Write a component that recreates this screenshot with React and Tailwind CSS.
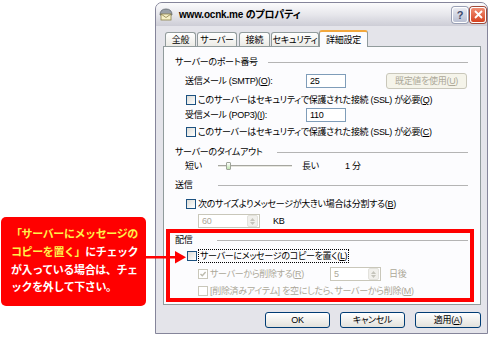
import React from "react";

const F = "font-['Liberation_Sans','Noto_Sans_CJK_JP',sans-serif]";

function Check({ checked, disabled }) {
  return (
    <span
      className={`relative inline-block w-[10px] h-[10px] shrink-0 border ${
        disabled ? "border-[#c9c7ba] bg-white" : "border-[#1c5180] bg-gradient-to-br from-[#dcdcd7] to-white"
      }`}
    >
      {checked && (
        <svg viewBox="0 0 8 8" className="absolute inset-0 w-full h-full">
          <path d="M1.5 4 L3.3 5.8 L6.6 2" stroke={disabled ? "#bdbbad" : "#21a121"} strokeWidth="1.4" fill="none" />
        </svg>
      )}
    </span>
  );
}

function Heading({ children, w }) {
  return (
    <div className="flex items-center h-[14px]">
      <span className={`shrink-0 ${w}`}>{children}</span>
      <span className="flex-1 h-px bg-[#b4b4b4]" />
    </div>
  );
}

function Spin({ value, w }) {
  return (
    <div className={`${w} h-[14px] border border-[#c9c7ba] bg-white flex items-center text-[#aca899]`}>
      <span className="flex-1 pl-[3px]">{value}</span>
      <span className="w-[11px] h-[12px] mr-[1px] bg-[#f1f0ec] border border-[#e3e2dc] rounded-[2px] flex flex-col items-center justify-center gap-[1px]">
        <svg width="5" height="3" viewBox="0 0 5 3"><path d="M0 3 L2.5 0 L5 3 Z" fill="#c5c4bb" /></svg>
        <svg width="5" height="3" viewBox="0 0 5 3"><path d="M0 0 L2.5 3 L5 0 Z" fill="#c5c4bb" /></svg>
      </span>
    </div>
  );
}

function Btn({ children, className = "" }) {
  return (
    <div
      className={`h-[16px] rounded-[3px] border border-[#003c74] bg-gradient-to-b from-white to-[#e3e2dc] flex items-center justify-center ${className}`}
    >
      {children}
    </div>
  );
}

function Tab({ children, w, selected }) {
  if (selected)
    return (
      <div
        className={`${w} h-[17px] -mb-px relative z-10 bg-[#fcfcfe] border-x border-[#919b9c] rounded-t-[3px] border-t-[2px] border-t-[#f3a83c] flex items-center justify-center`}
      >
        {children}
      </div>
    );
  return (
    <div
      className={`${w} h-[14px] bg-gradient-to-b from-white to-[#ecebe6] border-x border-t border-[#919b9c] rounded-t-[3px] flex items-center justify-center`}
    >
      {children}
    </div>
  );
}

export default function App() {
  return (
    <div className={`relative w-[490px] h-[340px] bg-white flex whitespace-nowrap ${F} text-[9px] leading-[14px] tracking-[-0.3px] text-black [font-feature-settings:'palt']`}>
      {/* callout */}
      <div className="w-[154px] shrink-0 pt-[217px] pl-[1px]">
        <div className="w-[145px] h-[89px] rounded-[5px] bg-[#ff0000] pl-[10px] pt-[9px] text-[11px] leading-[17.8px] font-bold tracking-[-0.4px] text-white [font-feature-settings:normal]">
          <div className="text-[#fff04a]">「サーバーにメッセージの</div>
          <div>
            <span className="text-[#fff04a]">コピーを置く」</span>にチェック
          </div>
          <div>が入っている場合は、チェ</div>
          <div>ックを外して下さい。</div>
        </div>
      </div>

      {/* window */}
      <div className="mt-[2px] ml-[1px] w-[333px] h-[332px] flex flex-col rounded-t-[7px] border border-[#85859a] bg-[#e4e4ea] overflow-hidden">
        {/* title bar */}
        <div className="h-[23px] shrink-0 flex items-center pl-[2px] pr-[1px] bg-gradient-to-b from-[#fbfbfc] via-[#e7e7ec] to-[#cdcdd6]">
          <svg width="16" height="15" viewBox="0 0 16 15" className="shrink-0">
            <path d="M2 8 Q2 2 8 2 Q14 2 14 8 Z" fill="#9aa0a8" stroke="#5d636b" strokeWidth="0.8" />
            <rect x="3" y="7" width="10" height="6" fill="#f7f0c8" stroke="#8a7f4a" strokeWidth="0.8" />
            <path d="M3 7 L8 10.5 L13 7" fill="none" stroke="#8a7f4a" strokeWidth="0.8" />
          </svg>
          <span className="ml-[5px] font-bold text-[10px] tracking-[-0.2px]">www.ocnk.me のプロパティ</span>
          <span className="flex-1" />
          <div className="w-[16px] h-[16px] rounded-[3px] border border-white bg-gradient-to-b from-[#e9ebf2] to-[#b9bfd2] flex items-center justify-center text-[11px] font-bold text-[#3f4a6b] shadow-[0_0_0_1px_#9aa0b5]">
            ?
          </div>
          <div className="ml-[2px] w-[16px] h-[16px] rounded-[3px] border border-white bg-gradient-to-b from-[#f08d72] to-[#d6401c] flex items-center justify-center shadow-[0_0_0_1px_#a04a3a]">
            <svg width="9" height="9" viewBox="0 0 9 9">
              <path d="M1 1 L8 8 M8 1 L1 8" stroke="white" strokeWidth="1.8" />
            </svg>
          </div>
        </div>

        {/* body */}
        <div className="flex-1 flex flex-col pl-[7px] pr-[6px]">
          <div className="h-[20px] flex items-end pl-[2px]">
            <Tab w="w-[31px]">全般</Tab>
            <div className="w-px" />
            <Tab w="w-[40px]">サーバー</Tab>
            <div className="w-[2px]" />
            <Tab w="w-[31px]">接続</Tab>
            <div className="w-px" />
            <Tab w="w-[48px]">セキュリティ</Tab>
            <Tab w="w-[49px]" selected>
              詳細設定
            </Tab>
          </div>

          {/* panel */}
          <div className="h-[259px] border border-[#919b9c] bg-[#fcfcfe] pl-[11px] pr-[12px] pt-[8px]">
            <Heading w="w-[93px]">サーバーのポート番号</Heading>

            <div className="mt-[4px] h-[16px] flex items-center pl-[10px]">
              <span className="w-[121px] shrink-0">
                送信メール (SMTP)(<u>O</u>):
              </span>
              <div className="w-[40px] h-[14px] border border-[#7f9db9] bg-white pl-[3px] flex items-center">25</div>
              <div className="ml-[40px] w-[81px] h-[16px] rounded-[3px] border border-[#c9c7ba] bg-[#f5f4ea] text-[#aca899] flex items-center justify-center">
                既定値を使用(<u>U</u>)
              </div>
            </div>

            <div className="mt-[4px] h-[14px] flex items-center pl-[11px] gap-[2px]">
              <Check />
              <span>
                このサーバーはセキュリティで保護された接続 (SSL) が必要(<u>Q</u>)
              </span>
            </div>

            <div className="mt-[1px] h-[14px] flex items-center pl-[10px]">
              <span className="w-[121px] shrink-0">
                受信メール (POP3)(<u>I</u>):
              </span>
              <div className="w-[40px] h-[14px] border border-[#7f9db9] bg-white pl-[3px] flex items-center">110</div>
            </div>

            <div className="mt-[3px] h-[14px] flex items-center pl-[11px] gap-[2px]">
              <Check />
              <span>
                このサーバーはセキュリティで保護された接続 (SSL) が必要(<u>C</u>)
              </span>
            </div>

            <div className="mt-[6px]">
              <Heading w="w-[102px]">サーバーのタイムアウト</Heading>
            </div>

            <div className="h-[14px] flex items-center pl-[10px]">
              <span className="w-[33px] shrink-0">短い</span>
              <div className="relative w-[74px] h-[3px] border-t border-[#a6a6a0] border-b border-b-white bg-[#e6e6e0]">
                <span className="absolute left-[8px] top-[-4px] w-[5px] h-[8px] rounded-[1px] border border-[#9fa59a] bg-gradient-to-b from-white to-[#bfe2b0]" />
              </div>
              <span className="ml-[10px] w-[43px] shrink-0">長い</span>
              <span>1 分</span>
            </div>

            <div className="mt-[5px]">
              <Heading w="w-[43px]">送信</Heading>
            </div>

            <div className="mt-[5px] h-[14px] flex items-center pl-[11px] gap-[2px]">
              <Check />
              <span>
                次のサイズよりメッセージが大きい場合は分割する(<u>B</u>)
              </span>
            </div>

            <div className="mt-[3px] h-[14px] flex items-center pl-[23px]">
              <Spin value="60" w="w-[62px]" />
              <span className="ml-[13px]">KB</span>
            </div>

            {/* highlighted group */}
            <div className="mt-[1px] -ml-[9px] -mr-[6px] h-[73px] border-[4px] border-[#ff0000] pl-[5px] pr-[2px]">
              <Heading w="w-[42px]">配信</Heading>

              <div className="mt-[2px] h-[14px] flex items-center pl-[12px] gap-[1px]">
                <Check />
                <span className="border border-dotted border-black px-px leading-[12px]">
                  サーバーにメッセージのコピーを置く(<u>L</u>)
                </span>
              </div>

              <div className="mt-[4px] h-[14px] flex items-center pl-[23px] text-[#aca899]">
                <Check checked disabled />
                <span className="ml-[2px] w-[120px] shrink-0">
                  サーバーから削除する(<u>R</u>)
                </span>
                <Spin value="5" w="w-[51px]" />
                <span className="ml-[8px]">日後</span>
              </div>

              <div className="mt-[3px] h-[14px] flex items-center pl-[23px] gap-[2px] text-[#aca899]">
                <Check disabled />
                <span>
                  [削除済みアイテム] を空にしたら、サーバーから削除(<u>M</u>)
                </span>
              </div>
            </div>
          </div>

          {/* buttons */}
          <div className="mt-[7px] flex justify-end gap-[10px]">
            <Btn className="w-[65px]">OK</Btn>
            <Btn className="w-[65px]">キャンセル</Btn>
            <Btn className="w-[66px]">
              適用(<u>A</u>)
            </Btn>
          </div>
        </div>
      </div>

      {/* arrow */}
      <svg className="absolute left-[146px] top-[250px]" width="40" height="14" viewBox="0 0 40 14">
        <rect x="0" y="6" width="30" height="2.5" fill="#ff0000" />
        <path d="M29 1 L40 7.2 L29 13.5 Z" fill="#ff0000" />
      </svg>
    </div>
  );
}
